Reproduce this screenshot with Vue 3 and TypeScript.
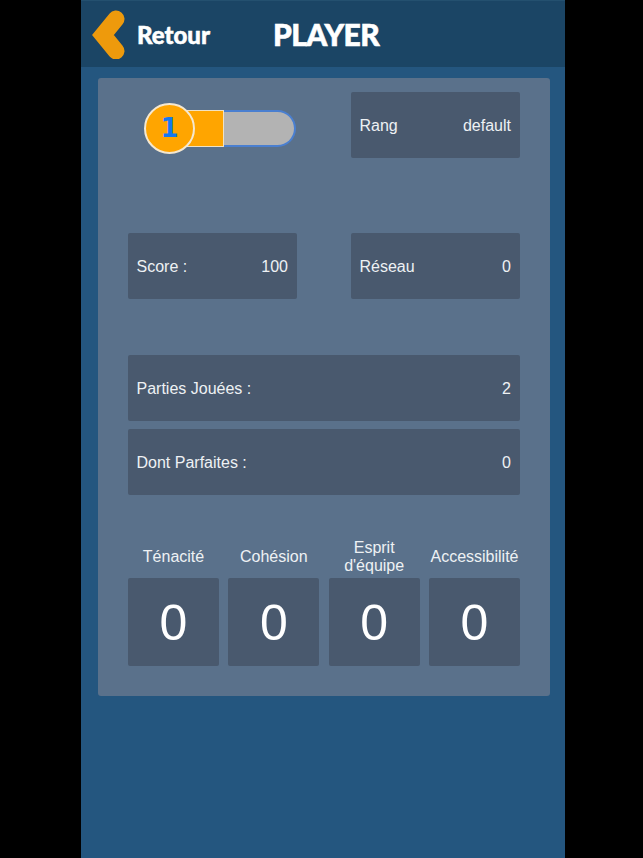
<template>
  <div class="screen">
    <header class="top-bar">
      <svg class="back-icon" width="36" height="50" viewBox="0 0 36 50">
        <path d="M24 10 L11 26 L24 42" fill="none" stroke="#ee9a0c" stroke-width="17" stroke-linecap="round" stroke-linejoin="miter" />
      </svg>
      <span class="back-label">Retour</span>
      <h1 class="title">PLAYER</h1>
    </header>

    <main class="panel">
      <section class="two-cols first">
        <div class="level">
          <div class="level-bar">
            <div class="level-fill" :style="{ width: levelPercent + '%' }"></div>
          </div>
          <div class="level-badge">1</div>
        </div>
        <div class="cell">
          <span>Rang</span>
          <span>default</span>
        </div>
      </section>

      <section class="two-cols second">
        <div class="cell">
          <span>Score :</span>
          <span>100</span>
        </div>
        <div class="cell">
          <span>Réseau</span>
          <span>0</span>
        </div>
      </section>

      <section class="wide-rows">
        <div class="cell">
          <span>Parties Jouées :</span>
          <span>2</span>
        </div>
        <div class="cell">
          <span>Dont Parfaites :</span>
          <span>0</span>
        </div>
      </section>

      <section class="stats">
        <div v-for="stat in stats" :key="stat.label" class="stat">
          <div class="stat-label">{{ stat.label }}</div>
          <div class="stat-value">{{ stat.value }}</div>
        </div>
      </section>
    </main>
  </div>
</template>

<script setup lang="ts">
const levelPercent = 45.5;

const stats = [
  { label: "Ténacité", value: 0 },
  { label: "Cohésion", value: 0 },
  { label: "Esprit d'équipe", value: 0 },
  { label: "Accessibilité", value: 0 },
];
</script>

<style>
html,
body {
  margin: 0;
  background: #000;
}
</style>

<style scoped>
.screen {
  box-sizing: border-box;
  width: 484px;
  height: 858px;
  margin-left: 81px;
  background: #24567f;
  font-family: "Liberation Sans", Arial, sans-serif;
  color: #eef1f4;
}

.top-bar {
  display: flex;
  align-items: center;
  height: 67px;
  padding-left: 11px;
  background: #1b4565;
  border-top: 1px solid #24506f;
  box-sizing: border-box;
}

.back-icon {
  flex: none;
}

.back-label {
  flex: none;
  width: 136px;
  margin-left: 9px;
  font-family: Lato, sans-serif;
  font-size: 24px;
  font-weight: 900;
  -webkit-text-stroke: 0.5px #fff;
  color: #fff;
}

.title {
  margin: 0;
  font-family: Lato, sans-serif;
  font-size: 30px;
  font-weight: 900;
  letter-spacing: -0.6px;
  -webkit-text-stroke: 0.6px #fff;
  color: #fff;
}

.panel {
  box-sizing: border-box;
  width: 452px;
  height: 618px;
  margin: 11px 0 0 17px;
  padding: 14px 30px 0;
  background: #5a718b;
  border-radius: 3px;
}

.two-cols {
  display: grid;
  grid-template-columns: 169px 169px;
  column-gap: 54px;
}

.second {
  margin-top: 75px;
}

.cell {
  box-sizing: border-box;
  display: flex;
  align-items: center;
  justify-content: space-between;
  height: 66px;
  padding: 1px 9px 0 8.5px;
  background: #49596e;
  border-radius: 2px;
  font-size: 16px;
}

.level {
  position: relative;
  height: 66px;
}

.level-bar {
  position: absolute;
  left: 37px;
  top: 17.5px;
  box-sizing: border-box;
  width: 131px;
  height: 37px;
  background: #b3b3b3;
  border: 2px solid #4a7fd0;
  border-left: none;
  border-radius: 0 19px 19px 0;
}

.level-fill {
  box-sizing: border-box;
  height: 37px;
  margin-top: -2px;
  background: #ffa500;
  border-top: 1px solid #f0e2c4;
  border-bottom: 1px solid #f0e2c4;
  border-right: 1px solid #f0e2c4;
}

.level-badge {
  position: absolute;
  left: 16px;
  top: 10.5px;
  box-sizing: border-box;
  width: 51px;
  height: 51px;
  display: flex;
  align-items: center;
  justify-content: center;
  background: #ffa500;
  border: 2px solid #f5e8d0;
  border-radius: 50%;
  color: #1478f0;
  font-family: "DejaVu Sans", sans-serif;
  font-size: 26px;
  font-weight: 700;
}

.wide-rows {
  display: flex;
  flex-direction: column;
  gap: 8px;
  margin-top: 56px;
}

.stats {
  display: grid;
  grid-template-columns: repeat(4, 91px);
  column-gap: 9.33px;
  margin-top: 43px;
}

.stat-label {
  display: flex;
  align-items: center;
  justify-content: center;
  height: 40px;
  margin-top: -1px;
  margin-bottom: 1px;
  text-align: center;
  font-size: 16px;
  line-height: 18px;
}

.stat-value {
  box-sizing: border-box;
  display: flex;
  align-items: center;
  justify-content: center;
  height: 88px;
  padding-top: 1px;
  background: #49596e;
  border-radius: 2px;
  font-size: 50px;
  color: #fff;
}
</style>
